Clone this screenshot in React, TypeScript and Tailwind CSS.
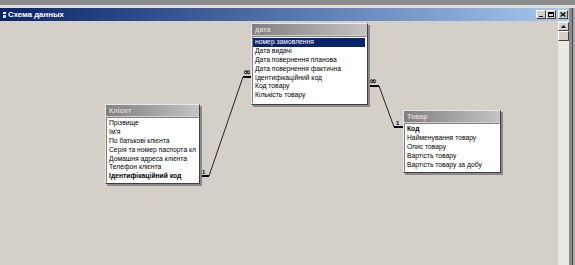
import React from "react";

type Row = { t: string; bold?: boolean; sel?: boolean };

function FieldList({ pos, title, rows }: { pos: string; title: string; rows: Row[] }) {
  return (
    <div
      className={`absolute ${pos} flex flex-col bg-[#d4d0c8] border border-t-[#e8e8e8] border-l-[#e8e8e8] border-r-[#404040] border-b-[#404040] shadow-[2px_2px_0_#8a8a8a]`}
    >
      <div className="h-[11px] shrink-0 bg-linear-to-r from-[#808080] to-[#c4c4c4] pl-[3px] text-[7px] leading-[11px] font-bold text-[#d8d4cc]">
        {title}
      </div>
      <div className="mt-[1px] flex-1 overflow-hidden bg-white border border-t-[#808080] border-l-[#808080] border-r-[#ffffff] border-b-[#ffffff] pt-[1px] pr-[1px]">
        {rows.map((r, i) => (
          <div
            key={i}
            className={`h-[8.9px] whitespace-nowrap overflow-hidden pl-[2px] text-[6.75px] leading-[8.9px] ${
              r.sel ? "bg-[#0a246a] text-white" : "text-black"
            } ${r.bold ? "font-bold" : ""}`}
          >
            {r.t}
          </div>
        ))}
      </div>
    </div>
  );
}

function WinBtn({ children }: { children: React.ReactNode }) {
  return (
    <div className="flex h-[9px] w-[10px] items-center justify-center bg-[#d4d0c8] border border-t-white border-l-white border-r-[#404040] border-b-[#404040]">
      {children}
    </div>
  );
}

export default function App() {
  return (
    <div
      className="flex h-[265px] w-[575px] flex-col overflow-hidden bg-[#d4d0c8]"
      style={{ fontFamily: '"Liberation Sans", Arial, sans-serif' }}
    >
      <div className="h-[5px] shrink-0 bg-[#8c8c8c]" />
      <div className="h-[3px] shrink-0 bg-[#dcdcdc]" />
      <div className="flex flex-1 min-h-0">
        <div className="flex flex-1 flex-col min-w-0">
          {/* title bar */}
          <div className="flex h-[13px] shrink-0 items-center bg-linear-to-r from-[#0a246a] to-[#a6caf0] pr-[1px]">
            <div className="ml-[3px] flex flex-col gap-[1px]">
              <div className="h-[2px] w-[3px] bg-white" />
              <div className="h-[3px] w-[3px] bg-[#c8d8f0]" />
            </div>
            <span className="ml-[2px] text-[7.8px] font-bold leading-[13px] text-white">Схема данных</span>
            <div className="ml-auto flex items-center">
              <WinBtn>
                <div className="mt-[4px] h-[1px] w-[4px] bg-black" />
              </WinBtn>
              <WinBtn>
                <div className="h-[5px] w-[6px] border border-black border-t-2" />
              </WinBtn>
              <div className="w-[2px]" />
              <WinBtn>
                <svg width="6" height="5" viewBox="0 0 6 5">
                  <path d="M0.5 0.5 L5.5 4.5 M5.5 0.5 L0.5 4.5" stroke="black" strokeWidth="1.3" />
                </svg>
              </WinBtn>
            </div>
          </div>
          {/* body */}
          <div className="flex flex-1 min-h-0">
            <div className="relative flex-1 bg-[#d4d0c8]">
              <svg className="absolute left-0 top-0" width="558" height="244">
                <line x1="209" y1="155" x2="243" y2="56" stroke="#202020" strokeWidth="1" />
                <line x1="379" y1="65" x2="394" y2="106" stroke="#202020" strokeWidth="1" />
                <rect x="199" y="154" width="10" height="2" fill="#000" />
                <rect x="243" y="55" width="9" height="2" fill="#000" />
                <rect x="368" y="64" width="11" height="2" fill="#000" />
                <rect x="394" y="105" width="9" height="2" fill="#000" />
                <text x="202" y="153" fontSize="6" fontWeight="bold" fontFamily="Liberation Sans, sans-serif" fill="#000">
                  1
                </text>
                <text x="396" y="104" fontSize="6" fontWeight="bold" fontFamily="Liberation Sans, sans-serif" fill="#000">
                  1
                </text>
                <text x="243" y="54" fontSize="9" fontWeight="bold" fontFamily="DejaVu Sans, sans-serif" fill="#000">
                  ∞
                </text>
                <text x="369" y="63" fontSize="9" fontWeight="bold" fontFamily="DejaVu Sans, sans-serif" fill="#000">
                  ∞
                </text>
              </svg>

              <FieldList
                pos="left-[251px] top-[2px] w-[117px] h-[82px]"
                title="дата"
                rows={[
                  { t: "номер замовлення", sel: true },
                  { t: "Дата видачі" },
                  { t: "Дата повернення планова" },
                  { t: "Дата повернення фактична" },
                  { t: "Ідентифікаційний код" },
                  { t: "Код товару" },
                  { t: "Кількість товару" },
                ]}
              />
              <FieldList
                pos="left-[105px] top-[83px] w-[95px] h-[80px]"
                title="Клієнт"
                rows={[
                  { t: "Прізвище" },
                  { t: "Ім'я" },
                  { t: "По батькові клієнта" },
                  { t: "Серія та номер паспорта кл" },
                  { t: "Домашня адреса клієнта" },
                  { t: "Телефон клієнта" },
                  { t: "Ідентифікаційний код", bold: true },
                ]}
              />
              <FieldList
                pos="left-[403px] top-[89px] w-[98px] h-[63px]"
                title="Товар"
                rows={[
                  { t: "Код", bold: true },
                  { t: "Найменування товару" },
                  { t: "Опис товару" },
                  { t: "Вартість товару" },
                  { t: "Вартість товару за добу" },
                ]}
              />
            </div>
            {/* scrollbar */}
            <div className="flex w-[11px] shrink-0 flex-col bg-[#ebe9e4]">
              <div className="mt-[1px] flex h-[9px] items-center justify-center bg-[#d4d0c8] border border-t-white border-l-white border-r-[#404040] border-b-[#404040]">
                <svg width="5" height="3" viewBox="0 0 5 3">
                  <path d="M2.5 0 L5 3 L0 3 Z" fill="black" />
                </svg>
              </div>
              <div className="h-[10px] bg-[#d4d0c8] border border-t-white border-l-white border-r-[#404040] border-b-[#404040]" />
            </div>
          </div>
        </div>
        <div className="flex w-[6px] shrink-0">
          <div className="w-[3px] bg-[#8a8a8a]" />
          <div className="w-[1px] bg-[#4a4a4a]" />
          <div className="w-[2px] bg-[#a8a8a8]" />
        </div>
      </div>
    </div>
  );
}
